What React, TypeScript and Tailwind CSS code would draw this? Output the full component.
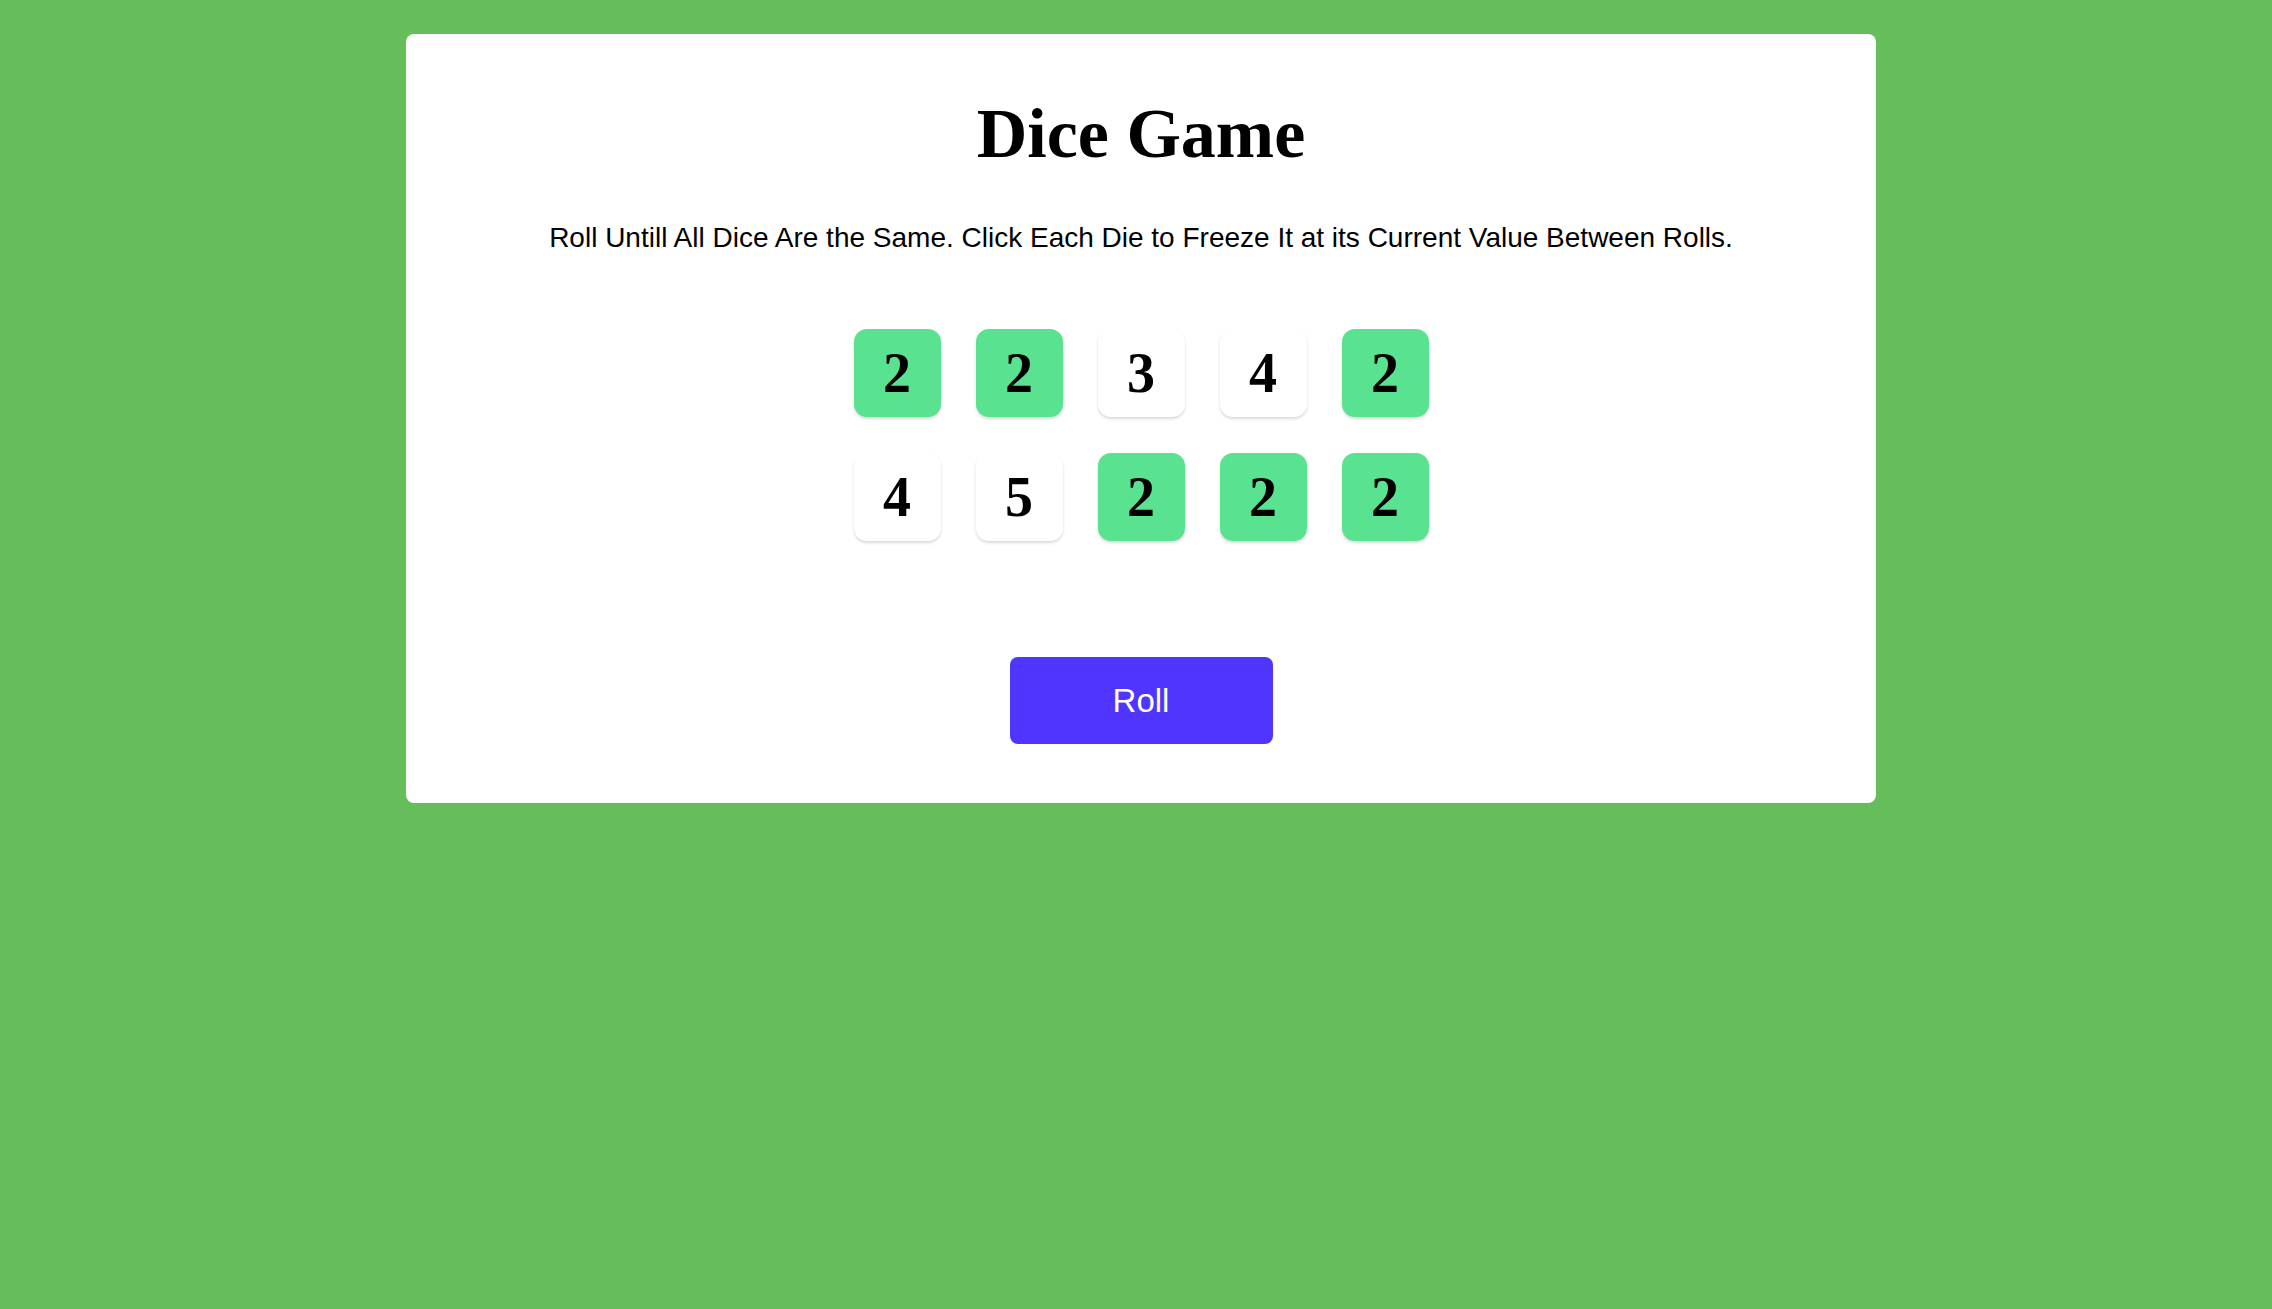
import React, { useState } from 'react';

type Die = { value: number; held: boolean };

const startDice: Die[] = [
  { value: 2, held: true },
  { value: 2, held: true },
  { value: 3, held: false },
  { value: 4, held: false },
  { value: 2, held: true },
  { value: 4, held: false },
  { value: 5, held: false },
  { value: 2, held: true },
  { value: 2, held: true },
  { value: 2, held: true },
];

export default function App() {
  const [dice, setDice] = useState<Die[]>(startDice);

  const toggleHold = (index: number) => {
    setDice((prev) => prev.map((d, i) => (i === index ? { ...d, held: !d.held } : d)));
  };

  const roll = () => {
    setDice((prev) =>
      prev.map((d) => (d.held ? d : { ...d, value: Math.ceil(Math.random() * 6) }))
    );
  };

  return (
    <main className="min-h-screen bg-[#65be5a] pt-[34px] pb-10">
      <div className="ml-[406px] w-[1470px] bg-white rounded-lg pt-[60px] pb-[59px] flex flex-col items-center">
        {/* Title */}
        <h1 className="text-[70px] font-bold text-black font-['Liberation_Serif','Times_New_Roman',serif] leading-[normal]">
          Dice Game
        </h1>
        <p className="mt-[48px] text-[28px] text-black font-['Liberation_Sans',Arial,sans-serif] leading-[normal]">
          Roll Untill All Dice Are the Same. Click Each Die to Freeze It at its Current Value Between Rolls.
        </p>

        {/* Dice grid */}
        <div className="mt-[75px] grid grid-cols-5 gap-x-[35px] gap-y-[36px]">
          {dice.map((die, index) => (
            <button
              key={index}
              onClick={() => toggleHold(index)}
              className={`w-[87px] h-[88px] rounded-[13px] flex items-center justify-center shadow-[0_2px_3px_rgba(0,0,0,0.15)] cursor-pointer ${
                die.held ? 'bg-[#59e391]' : 'bg-white'
              }`}
            >
              <span className="text-[56px] font-bold text-black font-['Liberation_Serif','Times_New_Roman',serif] leading-none">
                {die.value}
              </span>
            </button>
          ))}
        </div>

        <button
          onClick={roll}
          className="mt-[116px] w-[263px] h-[87px] rounded-lg bg-[#5035ff] text-white text-[33px] font-['Liberation_Sans',Arial,sans-serif] cursor-pointer"
        >
          Roll
        </button>
      </div>
    </main>
  );
}
